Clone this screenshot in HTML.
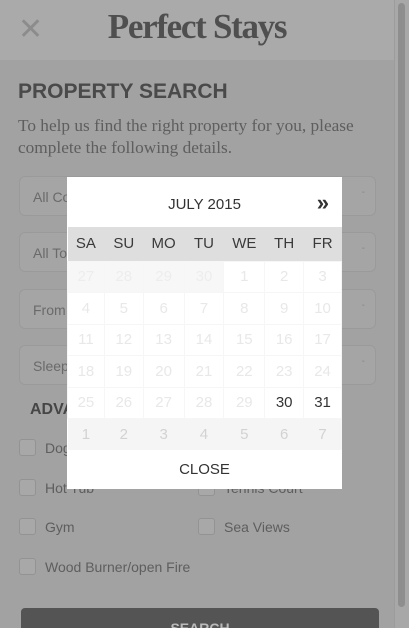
<!DOCTYPE html>
<html><head><meta charset="utf-8"><style>
*{box-sizing:border-box;margin:0;padding:0}
html,body{width:409px;height:628px;overflow:hidden}
body{background:#a2a2a2;font-family:"Liberation Sans",sans-serif;position:relative}
.hdr{position:absolute;left:0;top:0;width:394px;height:60px;background:#aaaaaa}
.x{position:absolute;left:18px;top:12px;font-size:30px;color:#8c8c8c;font-weight:300}
.logo{position:absolute;left:0;width:394px;top:7px;text-align:center;font-family:"Liberation Serif",serif;font-size:35px;color:#4f4f4f;letter-spacing:-1.3px;font-weight:bold}
.track{position:absolute;left:394px;top:0;width:15px;height:628px;background:#a8a8a8;border-left:1px solid #9c9c9c}
.thumb{position:absolute;left:398px;top:3px;width:7px;height:604px;background:#8e8e8e;border-radius:4px}
h1{position:absolute;left:18px;top:80px;font-size:21px;color:#4a4a4a;font-weight:bold;letter-spacing:0}
.intro{position:absolute;left:18px;top:115px;width:380px;font-family:"Liberation Serif",serif;font-size:17.3px;line-height:22px;color:#5e5e5e}
.inp{position:absolute;left:19px;width:357px;height:40px;border:1px solid #9a9a9a;border-radius:6px;background:#a5a5a5;font-size:14px;color:#6a6a6a;padding:12px 13px}
.inp:after{content:"-";position:absolute;right:10px;top:10px;font-size:10px;color:#888}
.adv{position:absolute;left:30px;top:401px;font-size:16px;font-weight:bold;color:#464646}
.cb{position:absolute;width:17px;height:17px;border:1px solid #939393;border-radius:3px;background:#a8a8a8}
.lbl{position:absolute;font-size:14px;color:#5e5e5e}
.btn{position:absolute;left:21px;top:608px;width:358px;height:40px;background:#545454;border-radius:4px;color:#bbb;text-align:center;font-size:14px;padding-top:12px;font-weight:bold}
.cal{position:absolute;left:67px;top:177px;width:275px;height:312px;background:#fff}
.ct{position:absolute;left:0;top:0;width:275px;height:50px;text-align:center;font-size:15px;color:#333;padding-top:19px}
.nx{position:absolute;right:13px;top:13px;font-size:22px;color:#333;font-weight:bold}
table{position:absolute;left:0;top:50px;border-collapse:collapse;width:275px}
td{text-align:center;font-size:15px;color:#e8e8e8;height:31.5px;border:1px solid #f6f6f6;padding:0}
tr.dn td{background:#dedede;color:#3a3a3a;height:34px;font-size:15px;border:none}
tr.last td{background:#f5f5f5;color:#d2d2d2;border:none}
td.p{background:#f7f7f7;color:#ededed}
td.b{color:#333}
.close{position:absolute;left:0;top:273px;width:275px;height:39px;text-align:center;font-size:15px;color:#333;padding-top:11px}
</style></head><body>
<div class="hdr"><div class="x">✕</div><div class="logo">Perfect Stays</div></div>
<div class="track"></div><div class="thumb"></div>
<h1>PROPERTY SEARCH</h1>
<div class="intro">To help us find the right property for you, please complete the following details.</div>
<div class="inp" style="top:176px">All Counties</div>
<div class="inp" style="top:232px">All Towns</div>
<div class="inp" style="top:289px">From</div>
<div class="inp" style="top:345px">Sleeps</div>
<div class="adv">ADVANCED</div>
<div class="cb" style="left:19px;top:439px"></div><div class="lbl" style="left:45px;top:440px">Dog Friendly</div>
<div class="cb" style="left:19px;top:479px"></div><div class="lbl" style="left:45px;top:480px">Hot Tub</div>
<div class="cb" style="left:198px;top:479px"></div><div class="lbl" style="left:224px;top:480px">Tennis Court</div>
<div class="cb" style="left:19px;top:518px"></div><div class="lbl" style="left:45px;top:519px">Gym</div>
<div class="cb" style="left:198px;top:518px"></div><div class="lbl" style="left:224px;top:519px">Sea Views</div>
<div class="cb" style="left:19px;top:558px"></div><div class="lbl" style="left:45px;top:559px">Wood Burner/open Fire</div>
<div class="btn">SEARCH</div>
<div class="cal">
<div class="ct">JULY 2015</div><div class="nx">»</div>
<table>
<colgroup><col style="width:37px"><col style="width:39px"><col style="width:41px"><col style="width:40px"><col style="width:41px"><col style="width:39px"><col style="width:38px"></colgroup>
<tr class="dn"><td>SA</td><td>SU</td><td>MO</td><td>TU</td><td>WE</td><td>TH</td><td>FR</td></tr>
<tr><td class="p">27</td><td class="p">28</td><td class="p">29</td><td class="p">30</td><td>1</td><td>2</td><td>3</td></tr>
<tr><td>4</td><td>5</td><td>6</td><td>7</td><td>8</td><td>9</td><td>10</td></tr>
<tr><td>11</td><td>12</td><td>13</td><td>14</td><td>15</td><td>16</td><td>17</td></tr>
<tr><td>18</td><td>19</td><td>20</td><td>21</td><td>22</td><td>23</td><td>24</td></tr>
<tr><td>25</td><td>26</td><td>27</td><td>28</td><td>29</td><td class="b">30</td><td class="b">31</td></tr>
<tr class="last"><td>1</td><td>2</td><td>3</td><td>4</td><td>5</td><td>6</td><td>7</td></tr>
</table>
<div class="close">CLOSE</div>
</div>
</body></html>
